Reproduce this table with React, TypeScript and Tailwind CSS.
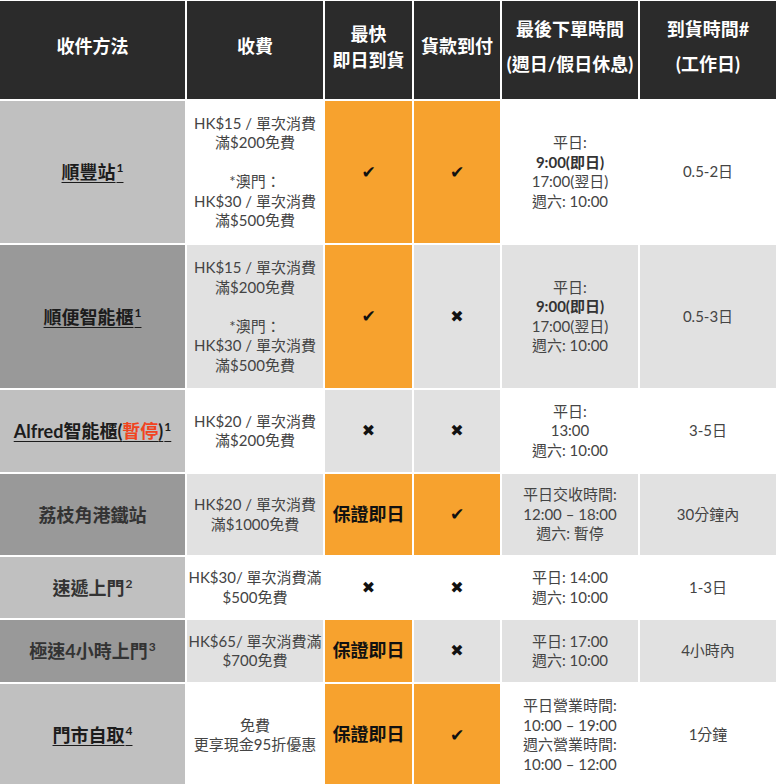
import React from 'react';

type Tone = 'w' | 'g' | 'o';

interface Row {
  h: string;
  labelBg: string;
  label: React.ReactNode;
  fee: React.ReactNode;
  feeBg: Tone;
  fast: React.ReactNode;
  fastBg: Tone;
  cod: React.ReactNode;
  codBg: Tone;
  cutoff: React.ReactNode;
  cutoffBg: Tone;
  eta: string;
  etaBg: Tone;
}

const toneClass: Record<Tone, string> = {
  w: 'bg-white',
  g: 'bg-[#e1e1e1]',
  o: 'bg-[#f7a22e]',
};

const Check = () => <span className="text-[17px] leading-none text-[#111] font-['DejaVu_Sans',sans-serif]">✔</span>;
const Cross = () => <span className="text-[16px] leading-none text-[#111] font-['DejaVu_Sans',sans-serif]">✖</span>;
const Same = () => <span className="text-[18px] font-bold text-[#111]">保證即日</span>;
const Sup = ({ n }: { n: number }) => (
  <sup className="text-[12px] font-bold ml-[1px] relative -top-[7px]">{n}</sup>
);

const macau = (
  <>
    HK$15 / 單次消費<br />滿$200免費<br /><br />*澳門：<br />HK$30 / 單次消費<br />滿$500免費
  </>
);

const sfCutoff = (
  <>
    平日:<br /><b className="font-bold text-[#333]">9:00(即日)</b><br />17:00(翌日)<br />週六: 10:00
  </>
);

const rows: Row[] = [
  {
    h: 'h-[142px]',
    labelBg: 'bg-[#c0c0c0]',
    label: <span className="underline underline-offset-[3px] text-[#1c1c1c]">順豐站<Sup n={1} /></span>,
    fee: macau,
    feeBg: 'w',
    fast: <Check />,
    fastBg: 'o',
    cod: <Check />,
    codBg: 'o',
    cutoff: sfCutoff,
    cutoffBg: 'w',
    eta: '0.5-2日',
    etaBg: 'w',
  },
  {
    h: 'h-[143px]',
    labelBg: 'bg-[#999999]',
    label: <span className="underline underline-offset-[3px] text-[#1c1c1c]">順便智能櫃<Sup n={1} /></span>,
    fee: macau,
    feeBg: 'g',
    fast: <Check />,
    fastBg: 'o',
    cod: <Cross />,
    codBg: 'g',
    cutoff: sfCutoff,
    cutoffBg: 'g',
    eta: '0.5-3日',
    etaBg: 'g',
  },
  {
    h: 'h-[82px]',
    labelBg: 'bg-[#c0c0c0]',
    label: (
      <span className="underline underline-offset-[3px] text-[#1c1c1c] whitespace-nowrap">
        Alfred智能櫃(<span className="text-[#f0441f]">暫停</span>)<Sup n={1} />
      </span>
    ),
    fee: <>HK$20 / 單次消費<br />滿$200免費</>,
    feeBg: 'w',
    fast: <Cross />,
    fastBg: 'g',
    cod: <Cross />,
    codBg: 'g',
    cutoff: <>平日:<br />13:00<br />週六: 10:00</>,
    cutoffBg: 'w',
    eta: '3-5日',
    etaBg: 'w',
  },
  {
    h: 'h-[81px]',
    labelBg: 'bg-[#999999]',
    label: <span className="text-[#333]">荔枝角港鐵站</span>,
    fee: <>HK$20 / 單次消費<br />滿$1000免費</>,
    feeBg: 'g',
    fast: <Same />,
    fastBg: 'o',
    cod: <Check />,
    codBg: 'o',
    cutoff: <>平日交收時間:<br />12:00 – 18:00<br />週六: 暫停</>,
    cutoffBg: 'g',
    eta: '30分鐘內',
    etaBg: 'g',
  },
  {
    h: 'h-[61px]',
    labelBg: 'bg-[#c0c0c0]',
    label: <span className="text-[#333]">速遞上門<Sup n={2} /></span>,
    fee: <>HK$30/ 單次消費滿<br />$500免費</>,
    feeBg: 'w',
    fast: <Cross />,
    fastBg: 'w',
    cod: <Cross />,
    codBg: 'w',
    cutoff: <>平日: 14:00<br />週六: 10:00</>,
    cutoffBg: 'w',
    eta: '1-3日',
    etaBg: 'w',
  },
  {
    h: 'h-[62px]',
    labelBg: 'bg-[#999999]',
    label: <span className="text-[#333]">極速4小時上門<Sup n={3} /></span>,
    fee: <>HK$65/ 單次消費滿<br />$700免費</>,
    feeBg: 'g',
    fast: <Same />,
    fastBg: 'o',
    cod: <Cross />,
    codBg: 'g',
    cutoff: <>平日: 17:00<br />週六: 10:00</>,
    cutoffBg: 'g',
    eta: '4小時內',
    etaBg: 'g',
  },
  {
    h: 'h-[102px]',
    labelBg: 'bg-[#c0c0c0]',
    label: <span className="underline underline-offset-[3px] text-[#1c1c1c]">門市自取<Sup n={4} /></span>,
    fee: <>免費<br />更享現金95折優惠</>,
    feeBg: 'w',
    fast: <Same />,
    fastBg: 'o',
    cod: <Check />,
    codBg: 'o',
    cutoff: <>平日營業時間:<br />10:00 – 19:00<br />週六營業時間:<br />10:00 – 12:00</>,
    cutoffBg: 'w',
    eta: '1分鐘',
    etaBg: 'w',
  },
];

const cell = 'flex items-center justify-center text-center';

export default function App() {
  return (
    <div className="w-[776px] h-[784px] overflow-hidden bg-white pt-[1px] font-['Lato','Noto_Sans_CJK_TC',sans-serif] text-[15px] leading-[19.5px] text-[#444]">
      <div className="grid grid-cols-[185px_136px_87px_86px_136px_136px] gap-[2px]">
        {/* header */}
        <div className={`${cell} h-[98px] bg-[#2b2b2b] text-white font-bold text-[18px] pb-[6px]`}>收件方法</div>
        <div className={`${cell} h-[98px] bg-[#2b2b2b] text-white font-bold text-[18px] pb-[6px]`}>收費</div>
        <div className={`${cell} h-[98px] bg-[#2b2b2b] text-white font-bold text-[18px] leading-[26px] pb-[6px]`}>最快<br />即日到貨</div>
        <div className={`${cell} h-[98px] bg-[#2b2b2b] text-white font-bold text-[18px] pb-[6px]`}>貨款到付</div>
        <div className={`${cell} h-[98px] bg-[#2b2b2b] text-white font-bold text-[18px] leading-[35px] pb-[6px]`}>最後下單時間<br />(週日/假日休息)</div>
        <div className={`${cell} h-[98px] bg-[#2b2b2b] text-white font-bold text-[18px] leading-[35px] pb-[6px]`}>到貨時間#<br />(工作日)</div>

        {rows.map((r, i) => (
          <React.Fragment key={i}>
            <div className={`${cell} ${r.h} ${r.labelBg} font-bold text-[18px] leading-[24px]`}>{r.label}</div>
            <div className={`${cell} ${r.h} ${toneClass[r.feeBg]} whitespace-nowrap`}>
              <div>{r.fee}</div>
            </div>
            <div className={`${cell} ${r.h} ${toneClass[r.fastBg]}`}>{r.fast}</div>
            <div className={`${cell} ${r.h} ${toneClass[r.codBg]}`}>{r.cod}</div>
            <div className={`${cell} ${r.h} ${toneClass[r.cutoffBg]}`}>
              <div>{r.cutoff}</div>
            </div>
            <div className={`${cell} ${r.h} ${toneClass[r.etaBg]}`}>{r.eta}</div>
          </React.Fragment>
        ))}
      </div>
    </div>
  );
}
